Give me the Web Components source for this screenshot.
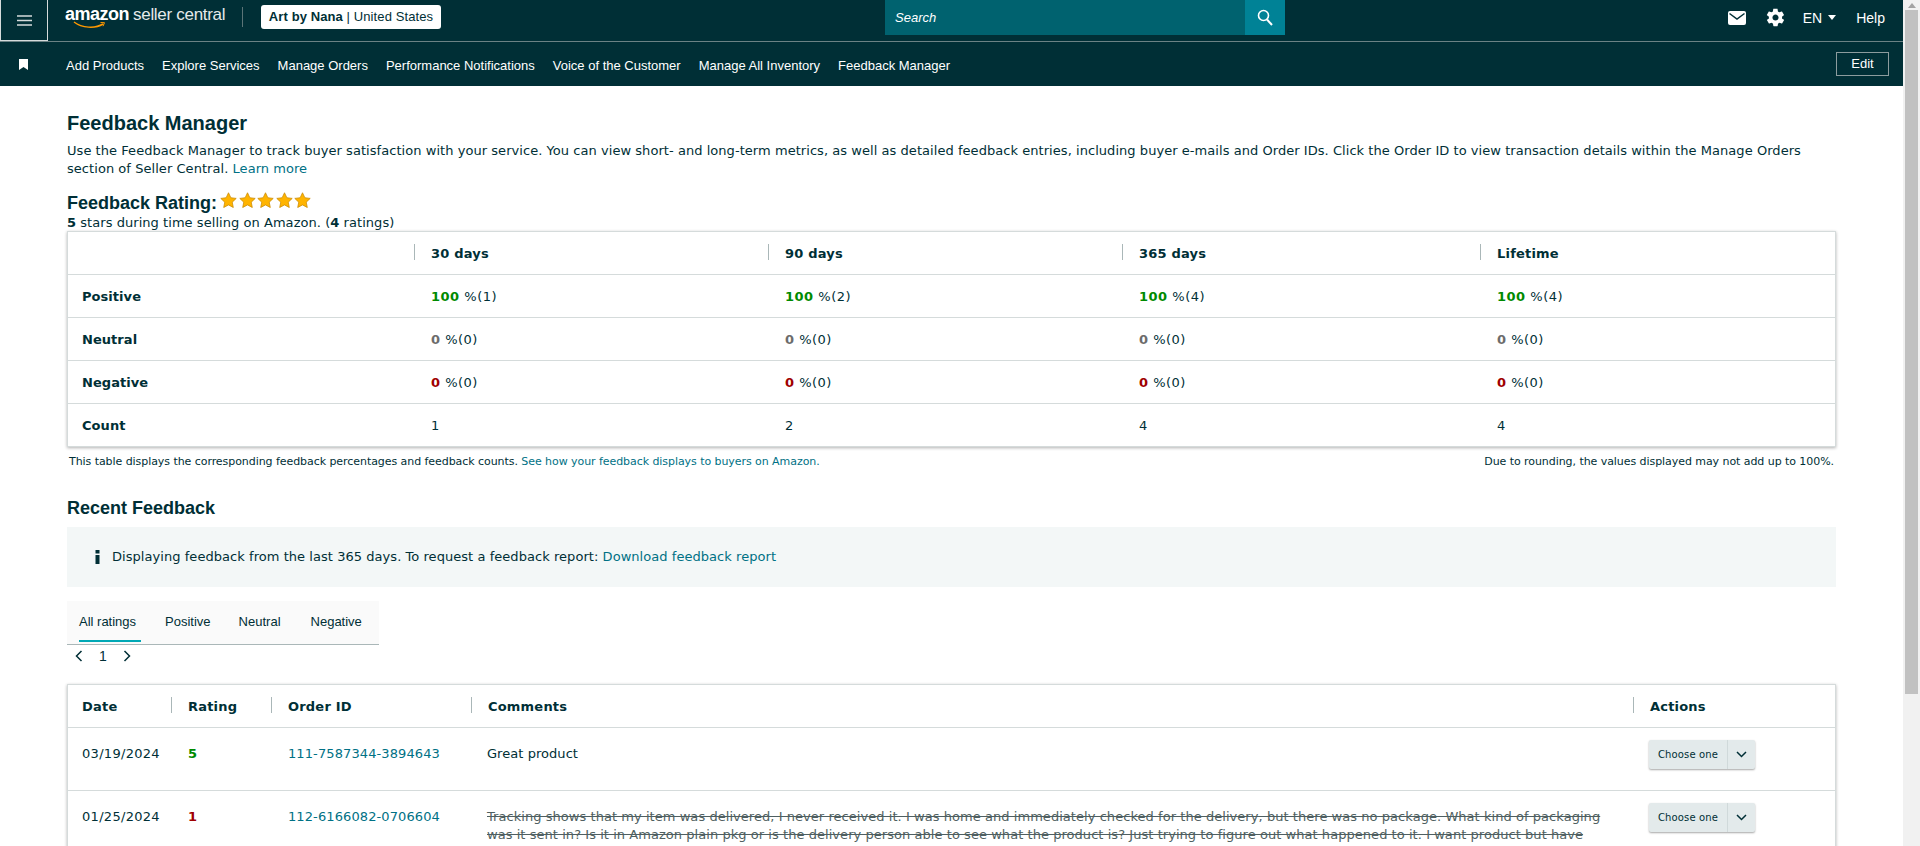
<!DOCTYPE html>
<html>
<head>
<meta charset="utf-8">
<title>Feedback Manager</title>
<style>
    html, body { margin: 0; height: 100%; overflow: hidden; }
    body {
        display: flex;
        background: #fff;
        color: #002f36;
        font-family: "DejaVu Sans", Verdana, sans-serif;
        font-size: 13px;
    }
    #page { flex: 1; min-width: 0; height: 846px; overflow: hidden; }
</style>
</head>
<body>
<div id="page">
    <top-bar></top-bar>
    <nav-bar>
        <nav-link>Add Products</nav-link>
        <nav-link>Explore Services</nav-link>
        <nav-link>Manage Orders</nav-link>
        <nav-link>Performance Notifications</nav-link>
        <nav-link>Voice of the Customer</nav-link>
        <nav-link>Manage All Inventory</nav-link>
        <nav-link>Feedback Manager</nav-link>
    </nav-bar>
    <feedback-page></feedback-page>
</div>
<fake-scrollbar></fake-scrollbar>

<script>
const topBarTemplate = document.createElement('template')
topBarTemplate.innerHTML = `
<style>
    :host {
        display: flex;
        align-items: flex-start;
        height: 41px;
        background: #002f36;
        border-bottom: 1px solid #6b8285;
        color: #fff;
        font-family: "Liberation Sans", Arial, sans-serif;
        font-size: 14px;
    }
    #menu {
        width: 46px;
        height: 40px;
        border: 1px solid #d5dbdb;
        border-top: 0;
        display: flex;
        align-items: center;
        justify-content: center;
        flex: none;
    }
    #left { display: flex; align-items: flex-start; flex: 0 0 837px; padding-left: 17px; box-sizing: border-box; }
    #logo { position: relative; width: 161px; height: 33px; flex: none; white-space: nowrap; }
    #amazon { font-size: 18px; font-weight: bold; letter-spacing: -0.5px; line-height: 28px; }
    #central { font-size: 17px; letter-spacing: -0.3px; line-height: 28px; margin-left: 4px; color: #e6eaea; }
    #smile { position: absolute; left: 8px; top: 21px; }
    #divider { width: 1px; height: 20px; background: #5b7477; margin: 7px 18px 0 16px; flex: none; }
    #account {
        background: #fff;
        color: #002f36;
        border-radius: 3px;
        height: 24px;
        line-height: 24px;
        width: 180px;
        text-align: center;
        font-size: 13px;
        letter-spacing: 0.1px;
        margin-top: 5px;
        white-space: nowrap;
    }
    #search { display: flex; height: 35px; flex: none; width: 400px; }
    #search-input {
        flex: 1;
        background: #00626f;
        color: #fff;
        font-style: italic;
        font-size: 13px;
        padding-left: 10px;
        line-height: 35px;
    }
    #search-button { width: 40px; height: 35px; background: #008296; display: flex; align-items: center; justify-content: center; }
    #right { flex: 1; display: flex; align-items: center; justify-content: flex-end; height: 35px; padding-right: 18px; }
    #mail { margin-right: 19px; }
    #gear { margin-right: 17px; }
    #lang { margin-right: 20px; display: flex; align-items: center; }
    #caret { width: 0; height: 0; border: 4px solid transparent; border-top: 5px solid #fff; border-bottom: 0; margin-left: 6px; }
</style>
<div id="menu">
    <svg width="15" height="11" viewBox="0 0 15 11"><path d="M0 1h15M0 5.500h15M0 10h15" stroke="#d5dbdb" stroke-width="1.700"/></svg>
</div>
<div id="left">
    <div id="logo">
        <span id="amazon">amazon</span><span id="central">seller central</span>
        <svg id="smile" width="34" height="9" viewBox="0 0 34 9"><path d="M1 1c8 6 21 7 29 2" fill="none" stroke="#f90" stroke-width="1.500"/><path d="M27.500 1.500l4 .2-1.500 3.500" fill="none" stroke="#f90" stroke-width="1"/></svg>
    </div>
    <div id="divider"></div>
    <div id="account"><b>Art by Nana</b> | United States</div>
</div>
<div id="search">
    <div id="search-input">Search</div>
    <div id="search-button">
        <svg width="16" height="17" viewBox="0 0 16 17"><circle cx="6.500" cy="6.500" r="5" fill="none" stroke="#fff" stroke-width="1.600"/><path d="M10 10.500l5 5.500" stroke="#fff" stroke-width="2"/></svg>
    </div>
</div>
<div id="right">
    <svg id="mail" width="18" height="14" viewBox="0 0 18 14"><rect width="18" height="14" rx="2" fill="#fff"/><path d="M1.500 2.500L9 8l7.500-5.500" fill="none" stroke="#002f36" stroke-width="1.500"/></svg>
    <svg id="gear" width="21" height="21" viewBox="0 0 24 24"><path fill="#fff" d="M19.400 13c.1-.3.100-.7.100-1s0-.7-.1-1l2.100-1.600c.2-.1.200-.4.100-.6l-2-3.500c-.1-.2-.4-.3-.6-.2l-2.500 1c-.5-.4-1.100-.7-1.700-1l-.4-2.600c0-.3-.2-.5-.5-.5h-4c-.3 0-.5.200-.5.500l-.4 2.600c-.6.300-1.200.6-1.700 1l-2.500-1c-.2-.1-.5 0-.6.200l-2 3.500c-.1.200-.1.500.1.600L4.500 11c0 .3-.1.700-.1 1s0 .7.1 1l-2.100 1.600c-.2.100-.2.400-.1.600l2 3.500c.1.200.4.300.6.200l2.500-1c.5.400 1.100.7 1.700 1l.4 2.600c0 .3.200.5.500.5h4c.3 0 .5-.2.500-.5l.4-2.600c.6-.3 1.200-.6 1.700-1l2.500 1c.2.100.5 0 .6-.2l2-3.500c.1-.2.100-.5-.1-.6L19.400 13zM12 15.500c-1.900 0-3.500-1.600-3.500-3.500s1.600-3.500 3.500-3.500 3.500 1.600 3.500 3.500-1.600 3.500-3.500 3.500z"/></svg>
    <div id="lang">EN<span id="caret"></span></div>
    <div>Help</div>
</div>
`
customElements.define("top-bar",
    class TopBar extends HTMLElement {
        constructor() {
            super()
            this.attachShadow({ mode: "open" })
            this.shadowRoot.appendChild(topBarTemplate.content.cloneNode(true))
        }
    }
)

const navBarTemplate = document.createElement('template')
navBarTemplate.innerHTML = `
<style>
    :host {
        display: flex;
        align-items: center;
        height: 44px;
        background: #002f36;
        color: #fff;
        font-family: "Liberation Sans", Arial, sans-serif;
        font-size: 13px;
        padding: 0 14px 0 19px;
    }
    #bookmark { margin-right: 38px; flex: none; }
    #links { flex: 1; display: flex; gap: 18px; padding-top: 2px; }
    #edit {
        width: 51px;
        height: 22px;
        line-height: 22px;
        text-align: center;
        border: 1px solid #8c9c9e;
    }
</style>
<svg id="bookmark" width="9" height="11" viewBox="0 0 9 11"><path d="M0 0h9v11L4.500 8 0 11z" fill="#fff"/></svg>
<div id="links"><slot></slot></div>
<div id="edit">Edit</div>
`
customElements.define("nav-bar",
    class NavBar extends HTMLElement {
        constructor() {
            super()
            this.attachShadow({ mode: "open" })
            this.shadowRoot.appendChild(navBarTemplate.content.cloneNode(true))
        }
    }
)

customElements.define("nav-link",
    class NavLink extends HTMLElement {
        constructor() {
            super()
            this.attachShadow({ mode: "open" })
            this.shadowRoot.innerHTML = `<style>:host { display: block; white-space: nowrap; }</style><slot></slot>`
        }
    }
)

const pageTemplate = document.createElement('template')
pageTemplate.innerHTML = `
<style>
    :host {
        display: block;
        padding: 25px 67px 0 67px;
        font-family: "DejaVu Sans", Verdana, sans-serif;
        font-size: 13px;
        line-height: 18px;
        letter-spacing: 0.05px;
    }
    a { color: #007185; text-decoration: none; }
    h1, h2 {
        margin: 0;
        font-family: "Liberation Sans", Arial, sans-serif;
        font-weight: bold;
        color: #002f36;
        letter-spacing: 0;
    }
    h1 { font-size: 20px; line-height: 24px; }
    h2 { font-size: 18px; line-height: 22px; }
    #intro { margin: 7px 0 0; }
    #rating { display: flex; align-items: flex-start; margin-top: 14px; }
    #stars { display: flex; margin: 0 0 0 3px; }
    #sub { line-height: 14px; margin: 2px 0 1px; }
    #notes { display: flex; justify-content: space-between; font-size: 11px; letter-spacing: -0.06px; padding: 6px 2px 0 2px; line-height: 18px; }
    #recent { margin-top: 26px; }
    #info {
        display: flex;
        align-items: center;
        height: 60px;
        margin-top: 8px;
        background: #f3f7f7;
        padding-left: 28px;
    }
    #info svg { margin-right: 12px; }
    #tabs {
        display: flex;
        width: 312px;
        height: 43px;
        margin-top: 14px;
        background: #fafafa;
        border-bottom: 1px solid #aab7b8;
        font-family: "Liberation Sans", Arial, sans-serif;
        font-size: 13px;
        letter-spacing: 0;
    }
    #tabs rating-tab:last-child { margin-left: 2px; }
    #pager { display: flex; align-items: center; height: 22px; padding-left: 8px; font-family: "Liberation Sans", Arial, sans-serif; font-size: 14px; gap: 16px; }
    #orders { margin-top: 17px; }
</style>
<h1>Feedback Manager</h1>
<p id="intro">Use the Feedback Manager to track buyer satisfaction with your service. You can view short- and long-term metrics, as well as detailed feedback entries, including buyer e-mails and Order IDs. Click the Order ID to view transaction details within the Manage Orders section of Seller Central. <a>Learn more</a></p>
<div id="rating">
    <h2>Feedback Rating:</h2>
    <div id="stars">
        <rating-star></rating-star><rating-star></rating-star><rating-star></rating-star><rating-star></rating-star><rating-star></rating-star>
    </div>
</div>
<div id="sub"><b>5</b> stars during time selling on Amazon. (<b>4</b> ratings)</div>

<data-card>
    <metric-row head cols="|30 days|90 days|365 days|Lifetime"></metric-row>
    <metric-row label="Positive" tone="#008a00" counts="1|2|4|4" value="100"></metric-row>
    <metric-row label="Neutral" tone="#6c6c6c" counts="0|0|0|0" value="0"></metric-row>
    <metric-row label="Negative" tone="#a00000" counts="0|0|0|0" value="0"></metric-row>
    <metric-row last label="Count" plain="1|2|4|4"></metric-row>
</data-card>

<div id="notes">
    <div>This table displays the corresponding feedback percentages and feedback counts. <a>See how your feedback displays to buyers on Amazon.</a></div>
    <div>Due to rounding, the values displayed may not add up to 100%.</div>
</div>

<h2 id="recent">Recent Feedback</h2>
<div id="info">
    <svg width="5" height="14" viewBox="0 0 5 14"><rect x="0.500" y="0" width="4" height="3.500" fill="#002f36"/><rect x="0.500" y="5" width="4" height="9" fill="#002f36"/></svg>
    <div>Displaying feedback from the last 365 days. To request a feedback report: <a>Download feedback report</a></div>
</div>
<div id="tabs">
    <rating-tab active>All ratings</rating-tab>
    <rating-tab>Positive</rating-tab>
    <rating-tab>Neutral</rating-tab>
    <rating-tab>Negative</rating-tab>
</div>
<div id="pager">
    <svg width="8" height="12" viewBox="0 0 8 12"><path d="M6.500 1L1.500 6l5 5" fill="none" stroke="#002f36" stroke-width="1.500"/></svg>
    <span>1</span>
    <svg width="8" height="12" viewBox="0 0 8 12"><path d="M1.500 1l5 5-5 5" fill="none" stroke="#002f36" stroke-width="1.500"/></svg>
</div>

<data-card id="orders">
    <order-row head cols="Date|Rating|Order ID|Comments|Actions"></order-row>
    <order-row date="03/19/2024" rating="5" tone="#008a00" order="111-7587344-3894643" comment="Great product"></order-row>
    <order-row date="01/25/2024" rating="1" tone="#a00000" order="112-6166082-0706604" struck comment="Tracking shows that my item was delivered, I never received it. I was home and immediately checked for the delivery, but there was no package. What kind of packaging was it sent in? Is it in Amazon plain pkg or is the delivery person able to see what the product is? Just trying to figure out what happened to it. I want product but have"></order-row>
</data-card>
`
customElements.define("feedback-page",
    class FeedbackPage extends HTMLElement {
        constructor() {
            super()
            this.attachShadow({ mode: "open" })
            this.shadowRoot.appendChild(pageTemplate.content.cloneNode(true))
        }
    }
)

customElements.define("rating-star",
    class RatingStar extends HTMLElement {
        constructor() {
            super()
            this.attachShadow({ mode: "open" })
            this.shadowRoot.innerHTML = `
<style>:host { display: block; width: 18.600px; height: 16px; } svg { display: block; }</style>
<svg width="17" height="16" viewBox="0 0 18 17"><path d="M9 .8l2.500 5.300 5.700.7-4.200 4 1.100 5.700L9 13.700l-5.100 2.800L5 10.800l-4.200-4 5.700-.7z" fill="#ffb400" stroke="#c98a00" stroke-width=".8"/></svg>`
        }
    }
)

customElements.define("data-card",
    class DataCard extends HTMLElement {
        constructor() {
            super()
            this.attachShadow({ mode: "open" })
            this.shadowRoot.innerHTML = `
<style>
    :host {
        display: block;
        background: #fff;
        border: 1px solid #d5dbdb;
        box-shadow: 0 1px 3px rgba(0, 0, 0, 0.3);
    }
</style>
<slot></slot>`
        }
    }
)

class GridRow extends HTMLElement {
    constructor() {
        super()
        this.attachShadow({ mode: "open" })
    }
    styles (columns) {
        return `
<style>
    :host {
        display: grid;
        grid-template-columns: ${columns};
        border-bottom: 1px solid #d5dbdb;
        font-size: 13px;
        line-height: 18px;
    }
    :host([last]) { border-bottom: 0; }
    :host([head]), :host([label]) { height: 42px; align-items: center; }
    .cell { padding: 9px 13px 7px 17px; position: relative; }
    .cell:first-of-type { padding-left: 14px; }
    .head { font-weight: bold; letter-spacing: 0.2px; }
    .head:not(:first-of-type)::before {
        content: "";
        position: absolute;
        left: 0;
        top: 8px;
        height: 16px;
        width: 1px;
        background: #aab7b8;
    }
    a { color: #007185; text-decoration: none; }
    b { font-weight: bold; }
</style>`
    }
    headCells () {
        return this.getAttribute("cols").split("|").map(c => `<div class="cell head">${c}</div>`).join("")
    }
}

customElements.define("metric-row",
    class MetricRow extends GridRow {
        connectedCallback () {
            let cells
            if (this.hasAttribute("head")) {
                cells = this.headCells()
            } else if (this.hasAttribute("plain")) {
                cells = `<div class="cell"><b>${this.getAttribute("label")}</b></div>`
                cells += this.getAttribute("plain").split("|").map(c => `<div class="cell">${c}</div>`).join("")
            } else {
                const tone = this.getAttribute("tone")
                const value = this.getAttribute("value")
                cells = `<div class="cell"><b>${this.getAttribute("label")}</b></div>`
                cells += this.getAttribute("counts").split("|").map(c =>
                    `<div class="cell" style="letter-spacing:.5px"><b style="color:${tone}">${value}</b> %(${c})</div>`).join("")
            }
            this.shadowRoot.innerHTML = this.styles("346px 354px 354px 358px 1fr") + cells
        }
    }
)

customElements.define("order-row",
    class OrderRow extends GridRow {
        connectedCallback () {
            const columns = "103px 100px 200px 1162px 1fr"
            if (this.hasAttribute("head")) {
                this.shadowRoot.innerHTML = this.styles(columns) + this.headCells()
                return
            }
            const struck = this.hasAttribute("struck") ? "text-decoration: line-through; color: #4f5f61;" : ""
            const tall = this.hasAttribute("struck") ? ":host { min-height: 100px; }" : ""
            const cells = `<div class="cell" style="letter-spacing:.3px">${this.getAttribute("date")}</div>
<div class="cell"><b style="color:${this.getAttribute("tone")}">${this.getAttribute("rating")}</b></div>
<div class="cell" style="letter-spacing:.1px"><a>${this.getAttribute("order")}</a></div>
<div class="cell" style="padding-left:16px;${struck}">${this.getAttribute("comment")}</div>
<div class="cell"><choose-menu></choose-menu></div>`
            this.shadowRoot.innerHTML = this.styles(columns) + `<style>:host { min-height: 62px; } ${tall} .cell { padding-top: 17px; }</style>` + cells
        }
    }
)

customElements.define("choose-menu",
    class ChooseMenu extends HTMLElement {
        constructor() {
            super()
            this.attachShadow({ mode: "open" })
            this.shadowRoot.innerHTML = `
<style>
    :host {
        display: inline-flex;
        height: 29px;
        margin: -5px 0 0 -1px;
        background: #e3eaeb;
        border-radius: 2px;
        box-shadow: 0 1px 2px rgba(0, 0, 0, 0.35);
        font-size: 10px;
        letter-spacing: 0.15px;
        line-height: 29px;
        vertical-align: top;
    }
    #label { width: 79px; text-align: center; border-right: 1px solid #d0d9da; box-sizing: border-box; }
    #arrow { width: 27px; display: flex; align-items: center; justify-content: center; }
</style>
<div id="label">Choose one</div>
<div id="arrow"><svg width="11" height="7" viewBox="0 0 11 7"><path d="M1 1l4.500 4.500L10 1" fill="none" stroke="#002f36" stroke-width="1.500"/></svg></div>`
        }
    }
)

customElements.define("rating-tab",
    class RatingTab extends HTMLElement {
        constructor() {
            super()
            this.attachShadow({ mode: "open" })
            this.shadowRoot.innerHTML = `
<style>
    :host { display: block; padding: 12px 14px 0 14px; height: 43px; box-sizing: border-box; line-height: 18px; white-space: nowrap; }
    :host([active]) { padding: 12px 5px 0 0; margin: 0 10px 0 12px; height: 41px; border-bottom: 2px solid #00a8b5; }
</style>
<slot></slot>`
        }
    }
)

customElements.define("fake-scrollbar",
    class FakeScrollbar extends HTMLElement {
        constructor() {
            super()
            this.attachShadow({ mode: "open" })
            this.shadowRoot.innerHTML = `
<style>
    :host { display: block; flex: none; width: 17px; height: 846px; background: #f1f1f1; }
    #up { height: 10px; display: flex; align-items: center; justify-content: center; }
    #up i { width: 0; height: 0; border: 4px solid transparent; border-bottom: 5px solid #a3a3a3; border-top: 0; }
    #thumb { height: 684px; background: #c1c1c1; margin: 0 2px; }
</style>
<div id="up"><i></i></div>
<div id="thumb"></div>`
        }
    }
)
</script>
</body>
</html>
